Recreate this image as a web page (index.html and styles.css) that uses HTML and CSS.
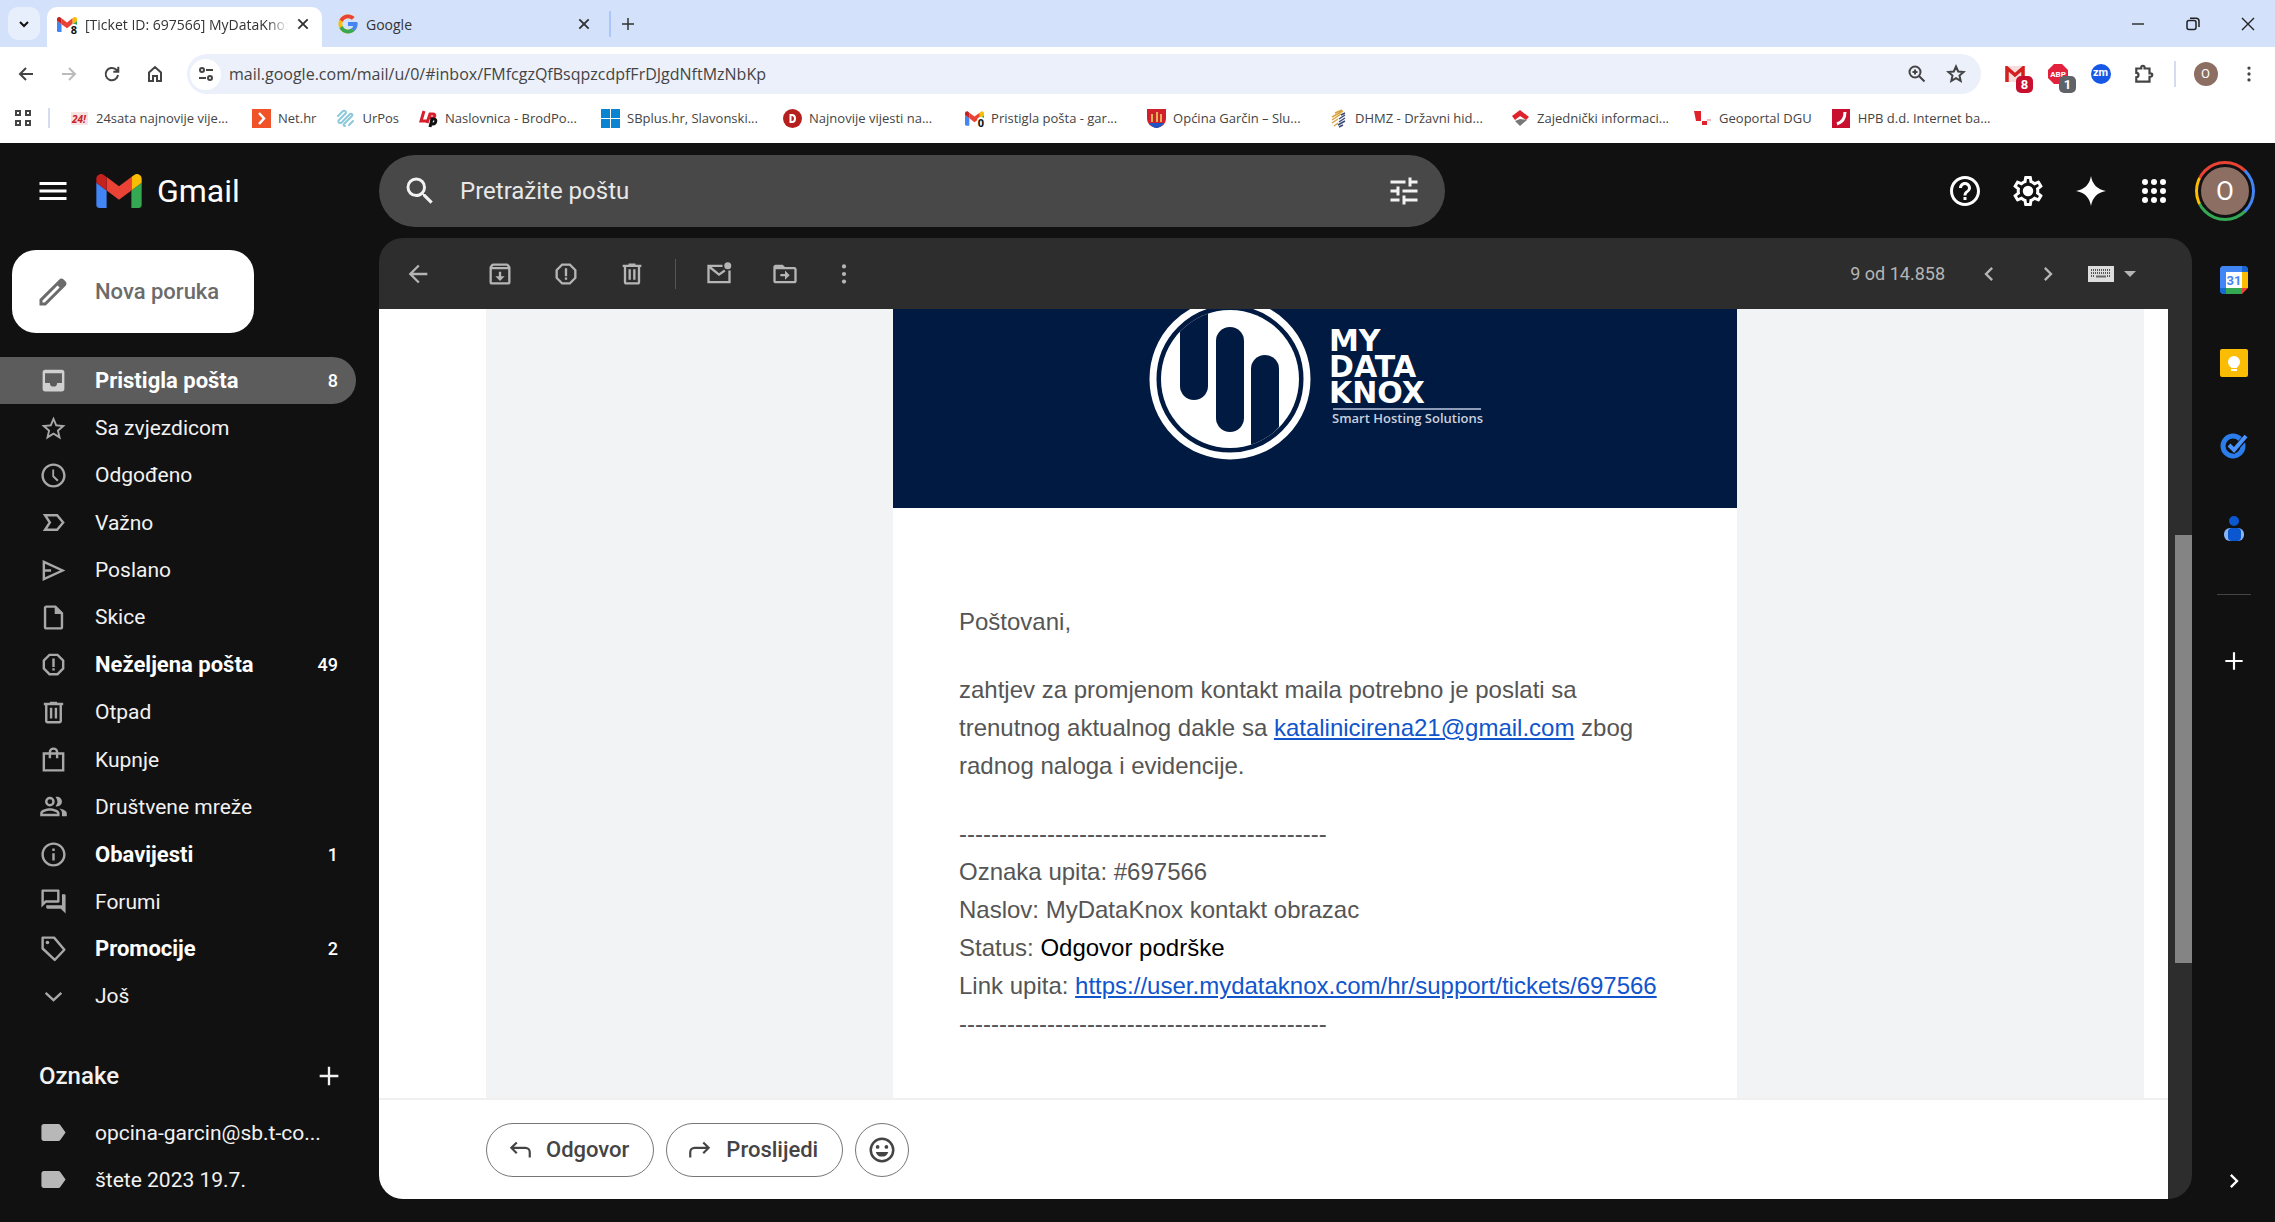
FILE: index.html
```html
<!DOCTYPE html>
<html lang="hr">
<head>
  <meta charset="UTF-8">
  <meta name="viewport" content="width=device-width, initial-scale=1.0">
  <title>[Ticket ID: 697566] MyDataKnox</title>
  <link rel="stylesheet" href="styles.css">
</head>
<body>

  <!-- shared icons -->
  <svg class="sprite" aria-hidden="true">
    <symbol id="i-gmail" viewBox="52 42 88 66">
      <path fill="#4285f4" d="M58 108h14V74L52 59v43c0 3.32 2.69 6 6 6"/>
      <path fill="#34a853" d="M120 108h14c3.32 0 6-2.69 6-6V59l-20 15"/>
      <path fill="#fbbc04" d="M120 48v26l20-15v-8c0-7.42-8.47-11.65-14.4-7.2"/>
      <path fill="#ea4335" d="M72 74V48l24 18 24-18v26L96 92"/>
      <path fill="#c5221f" d="M52 51v8l20 15V48l-5.6-4.2c-5.94-4.45-14.4-.22-14.4 7.2"/>
    </symbol>
    <symbol id="i-spam" viewBox="0 0 24 24">
      <path d="M15.73 3H8.27L3 8.27v7.46L8.27 21h7.46L21 15.73V8.27L15.73 3zM19 14.9L14.9 19H9.1L5 14.9V9.1L9.1 5h5.8L19 9.1v5.8zM11 7h2v7h-2zM11 15h2v2h-2z"/>
    </symbol>
    <symbol id="i-trash" viewBox="0 0 24 24">
      <path d="M15 4V3H9v1H4v2h1v13c0 1.1.9 2 2 2h10c1.1 0 2-.9 2-2V6h1V4h-5zm2 15H7V6h10v13zM9 8h2v9H9zm4 0h2v9h-2z"/>
    </symbol>
    <symbol id="i-dots" viewBox="0 0 24 24">
      <circle cx="12" cy="5.5" r="1.8"/><circle cx="12" cy="12" r="1.8"/><circle cx="12" cy="18.5" r="1.8"/>
    </symbol>
    <symbol id="i-plus" viewBox="0 0 24 24"><path d="M20 13h-7v7h-2v-7H4v-2h7V4h2v7h7v2z"/></symbol>
    <symbol id="i-close" viewBox="0 0 12 12"><path d="M2 2l8 8M10 2l-8 8" fill="none" stroke="currentColor" stroke-width="1.6"/></symbol>
    <symbol id="i-label" viewBox="0 0 24 24"><path d="M17.6 5.8C17.3 5.3 16.7 5 16 5L4 5c-1.1 0-2 .9-2 2v10c0 1.1.9 2 2 2h12c.7 0 1.3-.3 1.6-.8L22 12l-4.4-6.2z"/></symbol>
    <symbol id="i-right" viewBox="0 0 24 24"><path d="M10 6L8.59 7.41 13.17 12l-4.58 4.59L10 18l6-6z"/></symbol>
  </svg>

  <div class="tabstrip">
    <button class="tab-search" aria-label="Search tabs">
      <svg width="16" height="16" viewBox="0 0 16 16"><path d="M4 6l4 4 4-4" fill="none" stroke="#111" stroke-width="2"/></svg>
    </button>
    <div class="tab active">
      <span class="favicon"><svg width="20" height="17"><use href="#i-gmail"/></svg><b>8</b></span>
      <span class="tab-title">[Ticket ID: 697566] MyDataKnox</span>
      <button class="tab-close" aria-label="Close tab"><svg width="14" height="14"><use href="#i-close"/></svg></button>
    </div>
    <div class="tab">
      <svg width="20" height="20" viewBox="3 3 42 42">
        <path fill="#fbbc04" d="M43.6 20.1H42V20H24v8h11.3c-1.6 4.7-6.1 8-11.3 8-6.6 0-12-5.4-12-12s5.4-12 12-12c3.1 0 5.8 1.2 8 3l5.7-5.7C34 6.1 29.3 4 24 4 13 4 4 13 4 24s9 20 20 20 20-9 20-20c0-1.3-.1-2.6-.4-3.9z"/>
        <path fill="#ea4335" d="M6.3 14.7l6.6 4.8C14.7 15.1 19 12 24 12c3.1 0 5.8 1.2 8 3l5.7-5.7C34 6.1 29.3 4 24 4 16.3 4 9.7 8.3 6.3 14.7z"/>
        <path fill="#34a853" d="M24 44c5.2 0 9.9-2 13.4-5.2l-6.2-5.2C29.2 35.1 26.7 36 24 36c-5.2 0-9.6-3.3-11.3-7.9l-6.5 5C9.5 39.6 16.2 44 24 44z"/>
        <path fill="#4285f4" d="M43.6 20.1H42V20H24v8h11.3c-.8 2.2-2.2 4.2-4.1 5.6l6.2 5.2C37 39.2 44 34 44 24c0-1.3-.1-2.6-.4-3.9z"/>
      </svg>
      <span class="tab-title">Google</span>
      <button class="tab-close" aria-label="Close tab"><svg width="14" height="14"><use href="#i-close"/></svg></button>
    </div>
    <button class="new-tab" aria-label="New tab"><svg width="18" height="18"><use href="#i-plus"/></svg></button>
    <div class="window-controls">
      <button aria-label="Minimize"><svg width="14" height="14" viewBox="0 0 14 14"><path d="M1 7h12" stroke="#333" stroke-width="1.5"/></svg></button>
      <button aria-label="Restore"><svg class="line" width="14" height="14" viewBox="0 0 14 14" stroke="#222" stroke-width="1.5"><rect x="1" y="3.5" width="9" height="9" rx="2"/><path d="M4 1.2h6a3 3 0 0 1 3 3V10"/></svg></button>
      <button aria-label="Close"><svg width="16" height="16" viewBox="0 0 16 16"><path d="M2 2l12 12M14 2L2 14" stroke="#222" stroke-width="1.4"/></svg></button>
    </div>
  </div>

  <div class="toolbar">
    <button aria-label="Back"><svg width="20" height="20" viewBox="0 0 20 20"><path d="M17 10H4M10 4l-6 6 6 6"/></svg></button>
    <button class="off" aria-label="Forward"><svg width="20" height="20" viewBox="0 0 20 20"><path d="M3 10h13M10 4l6 6-6 6"/></svg></button>
    <button aria-label="Reload"><svg width="20" height="20" viewBox="0 0 20 20"><path d="M16 11a6.2 6.2 0 1 1-2-5.5L16 7.3M16.3 2.8v5h-5"/></svg></button>
    <button aria-label="Home"><svg width="20" height="20" viewBox="0 0 20 20"><path d="M4 8.5L10 3l6 5.5V17h-4v-5H8v5H4z"/></svg></button>
    <div class="omnibox">
      <button class="site-info" aria-label="Site information"><svg width="20" height="20" viewBox="0 0 20 20"><circle cx="6" cy="6" r="2"/><path d="M10 6h7M3 14h7"/><circle cx="14" cy="14" r="2"/></svg></button>
      <input type="text" aria-label="Address" value="mail.google.com/mail/u/0/#inbox/FMfcgzQfBsqpzcdpfFrDJgdNftMzNbKp">
      <button aria-label="Zoom"><svg width="20" height="20" viewBox="0 0 20 20"><circle cx="8" cy="8" r="5.5"/><path d="M12 12l5.5 5.5M8 5.5v5M5.5 8h5"/></svg></button>
      <button aria-label="Bookmark"><svg width="20" height="20" viewBox="0 0 20 20"><path d="M10 2.5l2.2 5 5.4.5-4.1 3.6 1.2 5.3-4.7-2.8-4.7 2.8 1.2-5.3L2.4 8l5.4-.5z"/></svg></button>
    </div>
    <button class="ext" aria-label="Gmail checker">
      <svg width="20" height="16" viewBox="0 0 20 16"><rect width="20" height="16" rx="1" fill="#f5dedc" stroke="none"/><path d="M2 16V2l8 7 8-7v14" stroke="#d3201f" stroke-width="3.5"/></svg>
      <span class="badge red">8</span>
    </button>
    <button class="ext" aria-label="Adblock Plus">
      <svg width="20" height="20" viewBox="0 0 20 20"><path d="M6 0h8l6 6v8l-6 6H6l-6-6V6z" fill="#e2213c" stroke="none"/><text x="10" y="13" class="abp">ABP</text></svg>
      <span class="badge grey">1</span>
    </button>
    <button class="ext" aria-label="Zoom meetings"><span class="zm">zm</span></button>
    <button aria-label="Extensions"><svg width="22" height="22" viewBox="0 0 20 20"><path d="M3 5h4.5V4a1.5 1.5 0 0 1 3 0v1H15v4.5h1a1.5 1.5 0 0 1 0 3h-1V17H3v-4a2 2 0 0 0 0-4z"/></svg></button>
    <span class="rule"></span>
    <button aria-label="Profile"><span class="mini-avatar">O</span></button>
    <button aria-label="Menu"><svg class="solid" width="22" height="22"><use href="#i-dots"/></svg></button>
  </div>

  <nav class="bookmarks">
    <button class="apps" aria-label="Apps"><svg class="line" width="18" height="18" viewBox="0 0 18 18" stroke="#444" stroke-width="2"><path d="M2 2h4v4H2zM12 2h4v4h-4zM2 12h4v4H2zM12 12h4v4h-4z"/></svg></button>
    <a class="wide" href="#"><svg width="19" height="19" viewBox="0 0 19 19"><rect x="1" y="3" width="17" height="13" fill="#f7e3df"/><text x="9" y="14" class="fav-24">24!</text></svg>24sata najnovije vije...</a>
    <a href="#"><svg width="19" height="19" viewBox="0 0 19 19"><path fill="#f0522a" d="M0 0h19v19H0z"/><path d="M7 4l5 5.5L7 15" fill="none" stroke="#fff" stroke-width="2.5"/></svg>Net.hr</a>
    <a href="#"><svg class="line" width="19" height="19" viewBox="0 0 19 19" stroke="#8cc8dc" stroke-width="2" stroke-linecap="round"><path d="M2 7l4-4c2-2 4-1 4 0s0 1-1 2l-6 6c-1 1-1 3 1 3s2-1 3-2l7-7c2-1 3 1 2 2l-8 8c-1 1 0 2 1 2M13 16l4-4"/></svg>UrPos</a>
    <a class="wide" href="#"><svg class="line" width="19" height="19" viewBox="0 0 19 19" stroke-width="3"><path d="M5 2L2 12h6" stroke="#d81e2c"/><path d="M8 14l3-9h3c3 0 2 4-1 4h-2" stroke="#d81e2c"/><path d="M11 18l2-8h2c3 0 2 5-1 5h-2" stroke="#111"/></svg>Naslovnica - BrodPo...</a>
    <a class="wide" href="#"><svg width="19" height="19" viewBox="0 0 19 19"><path fill="#0a84d0" d="M0 0h9v9H0zM10 0h9v9h-9zM0 10h9v9H0zM10 10h9v9h-9z"/></svg>SBplus.hr, Slavonski...</a>
    <a class="wide" href="#"><svg width="19" height="19" viewBox="0 0 19 19"><circle cx="9.5" cy="9.5" r="9.5" fill="#b5201f"/><path d="M7.5 6v7H9c4 0 4-7 0-7z" fill="none" stroke="#fff" stroke-width="2"/></svg>Najnovije vijesti na...</a>
    <a class="wide" href="#"><span class="favicon"><svg width="19" height="15"><use href="#i-gmail"/></svg><b>0</b></span>Pristigla pošta - gar...</a>
    <a class="wide" href="#"><svg width="19" height="19" viewBox="0 0 19 19"><path fill="#d0202a" d="M0 0h19v9c0 6-4 9-9.5 10C4 18 0 15 0 9z"/><path fill="#1d55c4" d="M2 14h15c-2 3-4 4.5-7.5 5C6 18.5 4 17 2 14z"/><path fill="#e3b15c" d="M4 5h2v8H4zM9 3h2v10H9zM13 5h2v8h-2z"/></svg>Općina Garčin – Slu...</a>
    <a class="wide" href="#"><svg class="line" width="19" height="19" viewBox="0 0 19 19" stroke-width="1.5"><path d="M6 4l7-3M3 8l11-6M3 11l9-6M3 14l6-4M5 17l4-3" stroke="#d9a441"/><path d="M12 6l4-2M10 10l6-4M10 13l6-4M9 16l7-4M10 18l4-2" stroke="#3a4a78"/></svg>DHMZ - Državni hid...</a>
    <a class="wide" href="#"><svg width="19" height="19" viewBox="0 0 19 19"><path fill="#e0222d" d="M1 7l8-6 9 7-3 3-6-4-5 4z"/><path fill="#777" d="M4 12l5-2 7 1-7 6z"/></svg>Zajednički informaci...</a>
    <a href="#"><svg width="19" height="19" viewBox="0 0 19 19"><path fill="#e0222d" d="M1 2h7v10H3zM9 12h5v4H9z"/><path fill="#f2b8bb" d="M14 10h4v2h-4z"/></svg>Geoportal DGU</a>
    <a class="wide" href="#"><svg width="19" height="19" viewBox="0 0 19 19"><path fill="#c8102e" d="M0 0h18v19H0z"/><path d="M13 3c0 6-2 10-8 12" fill="none" stroke="#fff" stroke-width="3"/></svg>HPB d.d. Internet ba...</a>
  </nav>

  <div class="gmail">
    <header class="header">
      <div class="brand">
        <button aria-label="Glavni izbornik"><svg width="36" height="36" viewBox="0 0 24 24"><path d="M3 18h18v-2H3v2zm0-5h18v-2H3v2zm0-7v2h18V6H3z"/></svg></button>
        <svg width="46" height="34"><use href="#i-gmail"/></svg>
        <span>Gmail</span>
      </div>
      <form class="search">
        <button type="button" aria-label="Traži"><svg width="36" height="36" viewBox="0 0 24 24"><path d="M15.5 14h-.79l-.28-.27A6.471 6.471 0 0 0 16 9.5 6.5 6.5 0 1 0 9.5 16c1.61 0 3.09-.59 4.23-1.57l.27.28v.79l5 4.99L20.49 19l-4.99-5zm-6 0C7.01 14 5 11.99 5 9.5S7.01 5 9.5 5 14 7.01 14 9.5 11.99 14 9.5 14z"/></svg></button>
        <input type="text" placeholder="Pretražite poštu" aria-label="Pretražite poštu">
        <button type="button" aria-label="Opcije pretraživanja"><svg width="36" height="36" viewBox="0 0 24 24"><path d="M3 17v2h6v-2H3zM3 5v2h10V5H3zm10 16v-2h8v-2h-8v-2h-2v6h2zM7 9v2H3v2h4v2h2V9H7zm14 4v-2H11v2h10zm-6-4h2V7h4V5h-4V3h-2v6z"/></svg></button>
      </form>
      <div class="header-actions">
        <button aria-label="Podrška"><svg width="36" height="36" viewBox="0 0 24 24"><path d="M11 18h2v-2h-2v2zm1-16C6.48 2 2 6.48 2 12s4.48 10 10 10 10-4.48 10-10S17.52 2 12 2zm0 18c-4.41 0-8-3.59-8-8s3.59-8 8-8 8 3.59 8 8-3.59 8-8 8zm0-14c-2.21 0-4 1.79-4 4h2c0-1.1.9-2 2-2s2 .9 2 2c0 2-3 1.75-3 5h2c0-2.25 3-2.5 3-5 0-2.21-1.79-4-4-4z"/></svg></button>
        <button aria-label="Postavke"><svg width="36" height="36" viewBox="0 0 24 24"><path d="M19.43 12.98c.04-.32.07-.64.07-.98 0-.34-.03-.66-.07-.98l2.11-1.65c.19-.15.24-.42.12-.64l-2-3.46a.5.5 0 0 0-.61-.22l-2.49 1c-.52-.4-1.08-.73-1.69-.98l-.38-2.65A.488.488 0 0 0 14 2h-4c-.25 0-.46.18-.49.42l-.38 2.65c-.61.25-1.17.59-1.69.98l-2.49-1a.566.566 0 0 0-.18-.03c-.17 0-.34.09-.43.25l-2 3.46c-.13.22-.07.49.12.64l2.11 1.65c-.04.32-.07.65-.07.98 0 .33.03.66.07.98l-2.11 1.65c-.19.15-.24.42-.12.64l2 3.46a.5.5 0 0 0 .61.22l2.49-1c.52.4 1.08.73 1.69.98l.38 2.65c.03.24.24.42.49.42h4c.25 0 .46-.18.49-.42l.38-2.65c.61-.25 1.17-.59 1.69-.98l2.49 1c.06.02.12.03.18.03.17 0 .34-.09.43-.25l2-3.46c.12-.22.07-.49-.12-.64l-2.11-1.65zm-1.98-1.71c.04.31.05.52.05.73 0 .21-.02.43-.05.73l-.14 1.13.89.7 1.08.84-.7 1.21-1.27-.51-1.04-.42-.9.68c-.43.32-.84.56-1.25.73l-1.06.43-.16 1.13-.2 1.35h-1.4l-.19-1.35-.16-1.13-1.06-.43c-.43-.18-.83-.41-1.23-.71l-.91-.7-1.06.43-1.27.51-.7-1.21 1.08-.84.89-.7-.14-1.13c-.03-.31-.05-.54-.05-.74s.02-.43.05-.73l.14-1.13-.89-.7-1.08-.84.7-1.21 1.27.51 1.04.42.9-.68c.43-.32.84-.56 1.25-.73l1.06-.43.16-1.13.2-1.35h1.39l.19 1.35.16 1.13 1.06.43c.43.18.83.41 1.23.71l.91.7 1.06-.43 1.27-.51.7 1.21-1.07.85-.89.7.14 1.13z"/><circle cx="12" cy="12" r="3.5"/></svg></button>
        <button aria-label="Gemini"><svg width="36" height="36" viewBox="0 0 24 24"><path d="M12 2c.9 5.6 4.4 9.1 10 10-5.6.9-9.1 4.4-10 10-.9-5.6-4.4-9.1-10-10 5.6-.9 9.1-4.4 10-10z"/></svg></button>
        <button aria-label="Google aplikacije"><svg width="36" height="36" viewBox="0 0 24 24"><circle cx="6" cy="6" r="2"/><circle cx="12" cy="6" r="2"/><circle cx="18" cy="6" r="2"/><circle cx="6" cy="12" r="2"/><circle cx="12" cy="12" r="2"/><circle cx="18" cy="12" r="2"/><circle cx="6" cy="18" r="2"/><circle cx="12" cy="18" r="2"/><circle cx="18" cy="18" r="2"/></svg></button>
        <button class="account" aria-label="Račun"><span>O</span></button>
      </div>
    </header>

    <aside class="sidebar">
      <button class="compose"><svg width="36" height="36" viewBox="0 0 24 24"><path d="M20.41 4.94l-1.35-1.35c-.78-.78-2.05-.78-2.83 0L3 16.82V21h4.18L20.41 7.77c.79-.78.79-2.05 0-2.83zM6.41 19H5v-1.41L15 7.6 16.4 9 6.41 19z"/></svg>Nova poruka</button>

      <ul class="folders">
        <li class="unread current"><a href="#"><svg viewBox="0 0 24 24"><path d="M19 3H5c-1.1 0-2 .9-2 2v14c0 1.1.9 2 2 2h14c1.1 0 2-.9 2-2V5c0-1.1-.9-2-2-2zm0 11h-4a3 3 0 0 1-6 0H5V6h14v8z"/></svg>Pristigla pošta<span class="count">8</span></a></li>
        <li><a href="#"><svg viewBox="0 0 24 24"><path d="M22 9.24l-7.19-.62L12 2 9.19 8.63 2 9.24l5.46 4.73L5.82 21 12 17.27 18.18 21l-1.63-7.03L22 9.24zM12 15.4l-3.76 2.27 1-4.28-3.32-2.88 4.38-.38L12 6.1l1.71 4.04 4.38.38-3.32 2.88 1 4.28L12 15.4z"/></svg>Sa zvjezdicom</a></li>
        <li><a href="#"><svg viewBox="0 0 24 24"><path d="M12 2C6.5 2 2 6.5 2 12s4.5 10 10 10 10-4.5 10-10S17.5 2 12 2zm0 18c-4.4 0-8-3.6-8-8s3.6-8 8-8 8 3.6 8 8-3.6 8-8 8zm.5-13H11v6l4 4 1.2-1.2-3.7-3.6z"/></svg>Odgođeno</a></li>
        <li><a href="#"><svg viewBox="0 0 24 24"><path d="M5 6h10l5 6-5 6H5l4-6z" fill="none" stroke="currentColor" stroke-width="2"/></svg>Važno</a></li>
        <li><a href="#"><svg viewBox="0 0 24 24"><path d="M4 4.8L19.5 12 4 19.2zM4 12h6" fill="none" stroke="currentColor" stroke-width="2"/></svg>Poslano</a></li>
        <li><a href="#"><svg viewBox="0 0 24 24"><path d="M14 2H6c-1.1 0-2 .9-2 2v16c0 1.1.9 2 2 2h12c1.1 0 2-.9 2-2V8l-6-6zM6 20V4h7v5h5v11H6z"/></svg>Skice</a></li>
        <li class="unread"><a href="#"><svg><use href="#i-spam"/></svg>Neželjena pošta<span class="count">49</span></a></li>
        <li><a href="#"><svg><use href="#i-trash"/></svg>Otpad</a></li>
        <li><a href="#"><svg viewBox="0 0 24 24"><path d="M4 7h16v14H4zM9 11V6a3 3 0 0 1 6 0v5" fill="none" stroke="currentColor" stroke-width="2"/></svg>Kupnje</a></li>
        <li><a href="#"><svg viewBox="0 0 24 24"><path d="M9 12a4 4 0 1 0 0-8 4 4 0 0 0 0 8zm0-6a2 2 0 1 1 0 4 2 2 0 0 1 0-4zm0 7.5c-2.7 0-8 1.3-8 4V20h16v-2.5c0-2.7-5.3-4-8-4zM15 18H3v-.5c.2-.7 3.3-2 6-2s5.8 1.3 6 2zM15 4c-.5 0-.9.1-1.3.2a6 6 0 0 1 0 7.6c.4.1.8.2 1.3.2a4 4 0 0 0 0-8zm1.7 9.6c1.4 1 2.3 2.2 2.3 3.9V20h4v-2.5c0-2.1-3.3-3.4-6.3-3.9z"/></svg>Društvene mreže</a></li>
        <li class="unread"><a href="#"><svg viewBox="0 0 24 24"><path d="M11 7h2v2h-2zm0 4h2v6h-2zm1-9C6.48 2 2 6.48 2 12s4.48 10 10 10 10-4.48 10-10S17.52 2 12 2zm0 18c-4.41 0-8-3.59-8-8s3.59-8 8-8 8 3.59 8 8-3.59 8-8 8z"/></svg>Obavijesti<span class="count">1</span></a></li>
        <li><a href="#"><svg viewBox="0 0 24 24"><path d="M15 4v7H5.17L4 12.17V4h11m1-2H3c-.55 0-1 .45-1 1v14l4-4h10c.55 0 1-.45 1-1V3c0-.55-.45-1-1-1zm5 4h-2v9H6v2c0 .55.45 1 1 1h11l4 4V7c0-.55-.45-1-1-1z"/></svg>Forumi</a></li>
        <li class="unread"><a href="#"><svg viewBox="0 0 24 24"><path d="M3 3v9l10 9.5 8-8.5-8.5-10z" fill="none" stroke="currentColor" stroke-width="2" stroke-linejoin="round"/><circle cx="7" cy="7" r="1.5"/></svg>Promocije<span class="count">2</span></a></li>
        <li><a href="#"><svg viewBox="0 0 24 24"><path d="M5.5 9l6.5 6 6.5-6" fill="none" stroke="currentColor" stroke-width="2"/></svg>Još</a></li>
      </ul>

      <div class="labels-head">
        <h2>Oznake</h2>
        <button aria-label="Nova oznaka"><svg width="28" height="28"><use href="#i-plus"/></svg></button>
      </div>
      <ul class="labels">
        <li><a href="#"><svg><use href="#i-label"/></svg>opcina-garcin@sb.t-co...</a></li>
        <li><a href="#"><svg><use href="#i-label"/></svg>štete 2023 19.7.</a></li>
      </ul>
    </aside>

    <main class="panel">
      <div class="actions">
        <button class="back" aria-label="Natrag"><svg viewBox="0 0 24 24"><path d="M20 11H7.8l5.6-5.6L12 4l-8 8 8 8 1.4-1.4L7.8 13H20z"/></svg></button>
        <button aria-label="Arhiviraj"><svg viewBox="0 0 24 24"><path d="M20.5 5.2l-1.4-1.7C18.9 3.2 18.5 3 18 3H6c-.5 0-.9.2-1.2.5L3.5 5.2C3.2 5.6 3 6 3 6.5V19c0 1.1.9 2 2 2h14c1.1 0 2-.9 2-2V6.5c0-.5-.2-.9-.5-1.3zM6.2 5h11.6l.8 1H5.4zM5 19V8h14v11zm8-9h-2v4H8l4 4 4-4h-3z"/></svg></button>
        <button aria-label="Prijavi neželjenu poštu"><svg><use href="#i-spam"/></svg></button>
        <button aria-label="Izbriši"><svg><use href="#i-trash"/></svg></button>
        <span class="divider"></span>
        <button aria-label="Označi kao nepročitano"><svg viewBox="0 0 24 24"><path d="M15 5H3v14h18V9M4 6l8 6.5L17 9" fill="none" stroke="currentColor" stroke-width="2"/><circle cx="19.5" cy="5" r="3"/></svg></button>
        <button aria-label="Premjesti"><svg viewBox="0 0 24 24"><path d="M20 6h-8l-2-2H4c-1.1 0-2 .9-2 2v12c0 1.1.9 2 2 2h16c1.1 0 2-.9 2-2V8c0-1.1-.9-2-2-2zm0 12H4V8h16zm-8-1l4-4-4-4v3H8v2h4z"/></svg></button>
        <button class="more" aria-label="Više"><svg><use href="#i-dots"/></svg></button>
        <span class="position">9 od 14.858</span>
        <button class="step" aria-label="Novije"><svg viewBox="0 0 24 24"><path d="M15.41 7.41L14 6l-6 6 6 6 1.41-1.41L10.83 12z"/></svg></button>
        <button class="step" aria-label="Starije"><svg><use href="#i-right"/></svg></button>
        <button class="keyboard" aria-label="Unos teksta">
          <svg class="keys" viewBox="0 0 26 16"><path fill="#ddd" d="M0 0h26v16H0z"/><path d="M3 4h20M3 7h20M3 10h4M19 10h4" stroke="#555" stroke-width="2" stroke-dasharray="1 1"/><path d="M8 10.5h10" stroke="#666" stroke-width="2"/></svg>
          <svg class="caret" viewBox="0 0 12 6"><path d="M0 0h12L6 6z"/></svg>
        </button>
      </div>

      <div class="content">
        <div class="mail">
          <div class="message">
            <div class="canvas">
              <article class="card">
                <div class="banner">
                  <svg width="332" height="160" viewBox="0 0 332 160">
                    <defs><clipPath id="disc"><circle cx="81" cy="80" r="69"/></clipPath></defs>
                    <circle cx="81" cy="80" r="77" fill="none" stroke="#fff" stroke-width="7"/>
                    <g clip-path="url(#disc)">
                      <path fill="#fff" d="M0 0h160v160H0z"/>
                      <path fill="#001a41" d="M31 32L59 0v87a14 14 0 0 1-28 0z"/>
                      <rect x="67" y="28" width="28" height="105" rx="14" fill="#001a41"/>
                      <path fill="#001a41" d="M102 160V70a14 14 0 0 1 28 0v58z"/>
                    </g>
                    <g class="wordmark">
                      <text x="180" y="52">MY</text>
                      <text x="180" y="78">DATA</text>
                      <text x="180" y="104">KNOX</text>
                    </g>
                    <path d="M184 110h148" stroke="#8f9db8" stroke-width="2"/>
                    <text x="183" y="124" class="tagline">Smart Hosting Solutions</text>
                  </svg>
                </div>
                <div class="letter">
                  <p>Poštovani,</p>
                  <p>zahtjev za promjenom kontakt maila potrebno je poslati sa trenutnog aktualnog dakle sa <a href="#">katalinicirena21@gmail.com</a> zbog radnog naloga i evidencije.</p>
                  <p>
                    ----------------------------------------------<br>
                    Oznaka upita: #697566<br>
                    Naslov: MyDataKnox kontakt obrazac<br>
                    Status: <span class="status">Odgovor podrške</span><br>
                    Link upita: <a href="#">https://user.mydataknox.com/hr/support/tickets/697566</a><br>
                    ----------------------------------------------
                  </p>
                </div>
              </article>
            </div>
          </div>
          <div class="reply-bar">
            <button><svg viewBox="0 0 24 24"><path d="M21 19v-5a4 4 0 0 0-4-4H4M9 5l-5 5 5 5" fill="none" stroke="currentColor" stroke-width="2"/></svg>Odgovor</button>
            <button><svg viewBox="0 0 24 24"><path d="M3 19v-5a4 4 0 0 1 4-4h13M15 5l5 5-5 5" fill="none" stroke="currentColor" stroke-width="2"/></svg>Proslijedi</button>
            <button class="emoji" aria-label="Dodaj reakciju"><svg viewBox="0 0 24 24"><circle cx="12" cy="12" r="9" fill="none" stroke="currentColor" stroke-width="2"/><circle cx="8.5" cy="9.5" r="1.5"/><circle cx="15.5" cy="9.5" r="1.5"/><path d="M7 13.5h10a5.2 5.2 0 0 1-10 0z"/></svg></button>
          </div>
        </div>
        <div class="scrollbar"><span></span></div>
      </div>
    </main>

    <aside class="apps-rail">
      <button aria-label="Kalendar"><svg width="28" height="28" viewBox="0 0 28 28"><path fill="#4285f4" d="M2 0h20v6H6v16H0V2z"/><path fill="#1967d2" d="M22 0h4l2 2v4h-6zM0 22h6v6H2l-2-2z"/><path fill="#fbbc04" d="M22 6h6v16h-6z"/><path fill="#34a853" d="M6 22h16v6H6z"/><path fill="#ea4335" d="M22 22h6l-6 6z"/><path fill="#fff" d="M6 6h16v16H6z"/><text x="14" y="19" class="day">31</text></svg></button>
      <button aria-label="Keep"><svg width="28" height="28" viewBox="0 0 28 28"><rect width="28" height="28" rx="2" fill="#fbbc04"/><circle cx="14" cy="13" r="6" fill="#fff"/><path fill="#fff" d="M11 17h6v2h-6zM11 20h6v2h-6z"/></svg></button>
      <button aria-label="Zadaci"><svg class="line" width="28" height="28" viewBox="0 0 28 28"><circle cx="13" cy="14" r="10" stroke="#2b7de9" stroke-width="5"/><path d="M9 13l5 5L25 6" stroke="#111" stroke-width="6"/><path d="M9 13l5 5L26 4" stroke="#4b93ff" stroke-width="4"/></svg></button>
      <button aria-label="Kontakti"><svg width="28" height="28" viewBox="0 0 28 28"><circle cx="14" cy="6" r="5" fill="#0b57d0"/><rect x="4" y="13" width="20" height="13" rx="6" fill="#8ab4f8"/><rect x="8" y="13" width="13" height="13" rx="4" fill="#0b57d0"/></svg></button>
      <hr>
      <button class="add" aria-label="Preuzmi dodatke"><svg width="26" height="26"><use href="#i-plus"/></svg></button>
      <button class="hide" aria-label="Sakrij bočnu ploču"><svg width="28" height="28"><use href="#i-right"/></svg></button>
    </aside>
  </div>

</body>
</html>
```
FILE: styles.css
```css
* {
  box-sizing: border-box;
}

body {
  margin: 0;
  height: 100vh;
  display: flex;
  flex-direction: column;
  background-color: #111;
  font-family: Roboto, Arial, sans-serif;
  overflow: hidden;
}

button {
  display: flex;
  align-items: center;
  justify-content: center;
  padding: 0;
  border: none;
  background: none;
  color: inherit;
  font: inherit;
  cursor: pointer;
}

input {
  border: none;
  outline: none;
  background: none;
  font: inherit;
}

ul {
  list-style: none;
  margin: 0;
  padding: 0;
}

svg {
  display: block;
  flex: none;
  fill: currentColor;
}

svg.line {
  fill: none;
}

.sprite {
  display: none;
}

/* Browser window */

.tabstrip {
  display: flex;
  align-items: flex-end;
  height: 47px;
  padding-left: 8px;
  background-color: #d3e1fb;
  color: #333;
  font-family: "Open Sans", sans-serif;
  font-size: 14px;
}

.tab-search {
  width: 32px;
  height: 33px;
  margin: 0 7px 7px 0;
  border-radius: 10px;
  background-color: #e8effc;
}

.tab {
  display: flex;
  align-items: center;
  gap: 8px;
  width: 275px;
  height: 40px;
  margin-right: 6px;
  padding: 0 12px 6px 10px;
}

.tab.active {
  border-radius: 10px 10px 0 0;
  background-color: #fff;
}

.favicon {
  display: flex;
  position: relative;
}

.favicon b {
  position: absolute;
  right: -1px;
  bottom: -2px;
  padding: 0 1px;
  border-radius: 4px;
  background-color: #fff;
  color: #111;
  font-size: 11px;
  line-height: 11px;
}

.tab-title {
  flex: 1;
  overflow: hidden;
  white-space: nowrap;
}

.active .tab-title {
  -webkit-mask-image: linear-gradient(90deg, #000 90%, transparent);
  mask-image: linear-gradient(90deg, #000 90%, transparent);
}

.new-tab {
  width: 36px;
  height: 26px;
  margin-bottom: 10px;
  border-left: 2px solid #a8c7fa;
}

.window-controls {
  display: flex;
  height: 47px;
  margin-left: auto;
}

.window-controls button {
  width: 55px;
}

.toolbar {
  display: flex;
  align-items: center;
  height: 54px;
  padding: 0 5px 0 4px;
  background-color: #fff;
  color: #444;
}

.toolbar button {
  width: 43px;
  height: 40px;
}

.toolbar svg {
  fill: none;
  stroke: currentColor;
  stroke-width: 2px;
}

.toolbar .solid {
  fill: currentColor;
  stroke: none;
}

.toolbar .off {
  color: #bbb;
}

.omnibox {
  display: flex;
  flex: 1;
  align-items: center;
  height: 40px;
  margin: 0 12px 0 11px;
  padding: 0 6px 0 3px;
  border-radius: 20px;
  background-color: #ecf0fa;
}

.omnibox input {
  flex: 1;
  padding: 0 8px;
  color: #444;
  font-family: "Open Sans", sans-serif;
  font-size: 16px;
}

.omnibox button {
  width: 39px;
}

.omnibox .site-info {
  width: 31px;
  height: 31px;
  border-radius: 50%;
  background-color: #fff;
}

.ext {
  position: relative;
}

.badge {
  position: absolute;
  right: 3px;
  bottom: 1px;
  width: 17px;
  height: 17px;
  border-radius: 5px;
  color: #fff;
  font-size: 13px;
  font-weight: bold;
  line-height: 17px;
}

.badge.red {
  background-color: #c8102e;
}

.badge.grey {
  background-color: #5f6368;
}

.toolbar .abp {
  fill: #fff;
  stroke: none;
  font-size: 8px;
  font-weight: bold;
  text-anchor: middle;
}

.zm {
  width: 20px;
  height: 20px;
  border-radius: 50%;
  background-color: #1757e6;
  color: #fff;
  font-size: 11px;
  font-weight: bold;
  line-height: 18px;
}

.toolbar .rule {
  width: 2px;
  height: 26px;
  margin: 0 8px 0 9px;
  background-color: #d3dcf0;
}

.mini-avatar {
  width: 24px;
  height: 24px;
  border-radius: 50%;
  background-color: #8d6e63;
  color: #fff;
  font-size: 13px;
  line-height: 24px;
}

.bookmarks {
  display: flex;
  align-items: center;
  gap: 20px;
  height: 42px;
  padding: 0 0 8px 14px;
  background-color: #fff;
  font-family: "Open Sans", sans-serif;
  font-size: 13px;
}

.bookmarks a {
  display: flex;
  align-items: center;
  gap: 7px;
  color: #444;
  text-decoration: none;
  white-space: nowrap;
}

.bookmarks .wide {
  width: 162px;
}

.apps {
  height: 20px;
  padding-right: 16px;
  border-right: 2px solid #d3dcf0;
}

.fav-24 {
  fill: #c8202a;
  font-size: 10px;
  font-weight: bold;
  font-style: italic;
  text-anchor: middle;
}

/* Gmail */

.gmail {
  display: grid;
  flex: 1;
  grid-template-columns: 379px 1fr 83px;
  grid-template-rows: 95px minmax(0, 1fr);
  min-height: 0;
  padding-bottom: 23px;
  color: #f2f2f2;
}

.header {
  display: flex;
  grid-column: 1 / -1;
  align-items: center;
}

.brand {
  display: flex;
  align-items: center;
  width: 379px;
  padding-left: 35px;
  color: #fff;
  font-size: 32px;
}

.brand button {
  margin-right: 25px;
}

.brand span {
  margin-left: 15px;
}

.search {
  display: flex;
  flex: 0 1 1066px;
  align-items: center;
  height: 72px;
  padding: 0 23px;
  border-radius: 36px;
  background-color: #484848;
  font-size: 24px;
}

.search input {
  flex: 1;
  padding: 0 22px;
  color: #e8e8e8;
}

.search input::placeholder {
  color: #e8e8e8;
}

.header-actions {
  display: flex;
  align-items: center;
  margin-left: auto;
  padding-right: 20px;
  color: #fff;
}

.header-actions button {
  width: 63px;
}

.header-actions .account {
  width: 60px;
  height: 60px;
  margin-left: 10px;
  border-radius: 50%;
  background: conic-gradient(from 45deg, #4285f4 0 25%, #34a853 0 55%, #fbbc04 0 70%, #ea4335 0);
}

.account span {
  width: 54px;
  height: 54px;
  border: 3px solid #111;
  border-radius: 50%;
  background-color: #8d6e63;
  font-size: 26px;
  line-height: 48px;
}

.sidebar {
  padding-top: 12px;
  font-size: 21px;
}

.compose {
  justify-content: flex-start;
  gap: 24px;
  width: 242px;
  height: 83px;
  margin: 0 0 24px 12px;
  padding-left: 23px;
  border-radius: 24px;
  background-color: #fff;
  color: #6b6b6b;
  font-size: 22px;
  font-weight: 500;
}

.folders {
  display: flex;
  flex-direction: column;
  height: 663px;
}

.folders li {
  flex: 1;
}

.labels li {
  height: 47px;
}

.sidebar a {
  display: flex;
  align-items: center;
  height: 100%;
  margin-right: 23px;
  padding: 0 18px 0 39px;
  border-radius: 0 24px 24px 0;
  color: inherit;
  text-decoration: none;
  white-space: nowrap;
}

.sidebar a svg {
  width: 29px;
  height: 29px;
  margin-right: 27px;
  color: #a8a8a8;
}

.unread {
  color: #fff;
  font-size: 22px;
  font-weight: bold;
}

.current a {
  background-color: #5c5c5c;
}

.sidebar .current svg {
  color: #d0d0d0;
}

.count {
  margin-left: auto;
  font-size: 18px;
  font-weight: 500;
}

.labels-head {
  display: flex;
  align-items: center;
  justify-content: space-between;
  height: 48px;
  margin: 32px 0 9px;
  padding: 0 36px 0 39px;
}

.labels-head h2 {
  margin: 0;
  font-size: 24px;
  font-weight: 500;
}

.sidebar .labels svg {
  color: #b8b8b8;
}

.panel {
  display: flex;
  flex-direction: column;
  min-height: 0;
  border-radius: 24px;
  background-color: #2d2d2d;
  overflow: hidden;
}

.actions {
  display: flex;
  align-items: center;
  height: 71px;
  padding: 0 56px 0 6px;
  color: #b5b5b5;
  font-size: 18px;
}

.actions button {
  width: 66px;
  height: 48px;
}

.actions svg {
  width: 28px;
  height: 28px;
}

.actions .back {
  margin-right: 16px;
}

.actions .more {
  width: 52px;
}

.divider {
  width: 1px;
  height: 30px;
  margin: 0 10px;
  background-color: #555;
}

.position {
  margin: 0 14px 0 auto;
}

.actions .step {
  width: 59px;
}

.actions .keyboard {
  width: auto;
  gap: 10px;
  margin-left: 11px;
}

.actions .keys {
  width: 26px;
  height: 16px;
}

.actions .caret {
  width: 12px;
  height: 6px;
}

.content {
  display: flex;
  flex: 1;
  min-height: 0;
}

.mail {
  display: flex;
  flex: 1;
  flex-direction: column;
  background-color: #fff;
}

.message {
  display: flex;
  flex: 1;
  min-height: 0;
  padding: 0 24px 0 107px;
  border-bottom: 2px solid #f0f0f0;
}

.canvas {
  display: flex;
  flex: 1;
  justify-content: center;
  background-color: #f2f3f5;
}

.card {
  width: 844px;
  background-color: #fff;
}

.banner {
  display: flex;
  align-items: flex-end;
  justify-content: center;
  height: 199px;
  padding-bottom: 49px;
  background-color: #001a41;
  overflow: hidden;
}

.banner svg {
  overflow: visible;
}

.wordmark {
  fill: #fff;
  font-family: "DejaVu Sans", sans-serif;
  font-size: 30px;
  font-weight: bold;
}

.tagline {
  fill: #c9d0de;
  font-family: "Open Sans", sans-serif;
  font-size: 13px;
  font-weight: 600;
}

.letter {
  padding: 95px 66px 50px;
  color: #555;
  font-family: Arial, "Liberation Sans", sans-serif;
  font-size: 24px;
  line-height: 38px;
}

.letter p {
  margin: 0 0 30px;
}

.letter a {
  color: #15c;
}

.status {
  color: #000;
}

.reply-bar {
  display: flex;
  align-items: center;
  gap: 12px;
  height: 99px;
  padding-left: 107px;
  color: #444;
  font-size: 22px;
  font-weight: 500;
}

.reply-bar button {
  gap: 13px;
  height: 54px;
  padding: 0 24px 0 20px;
  border: 1px solid #747775;
  border-radius: 27px;
}

.reply-bar svg {
  width: 26px;
  height: 26px;
}

.reply-bar .emoji {
  width: 54px;
  padding: 0;
}

.reply-bar .emoji svg {
  width: 30px;
  height: 30px;
}

.scrollbar {
  display: grid;
  grid-template-rows: 226fr 428fr 236fr;
  width: 24px;
  padding-left: 7px;
}

.scrollbar span {
  grid-row: 2;
  background-color: #848484;
}

.apps-rail {
  display: flex;
  flex-direction: column;
  align-items: center;
  color: #fff;
}

.apps-rail button {
  width: 60px;
  height: 83px;
}

.day {
  fill: #4285f4;
  font-size: 13px;
  font-weight: bold;
  text-anchor: middle;
}

.apps-rail hr {
  width: 34px;
  margin: 24px 0;
  border: none;
  border-top: 1px solid #444;
}

.apps-rail .hide {
  height: 36px;
  margin-top: auto;
}
```
